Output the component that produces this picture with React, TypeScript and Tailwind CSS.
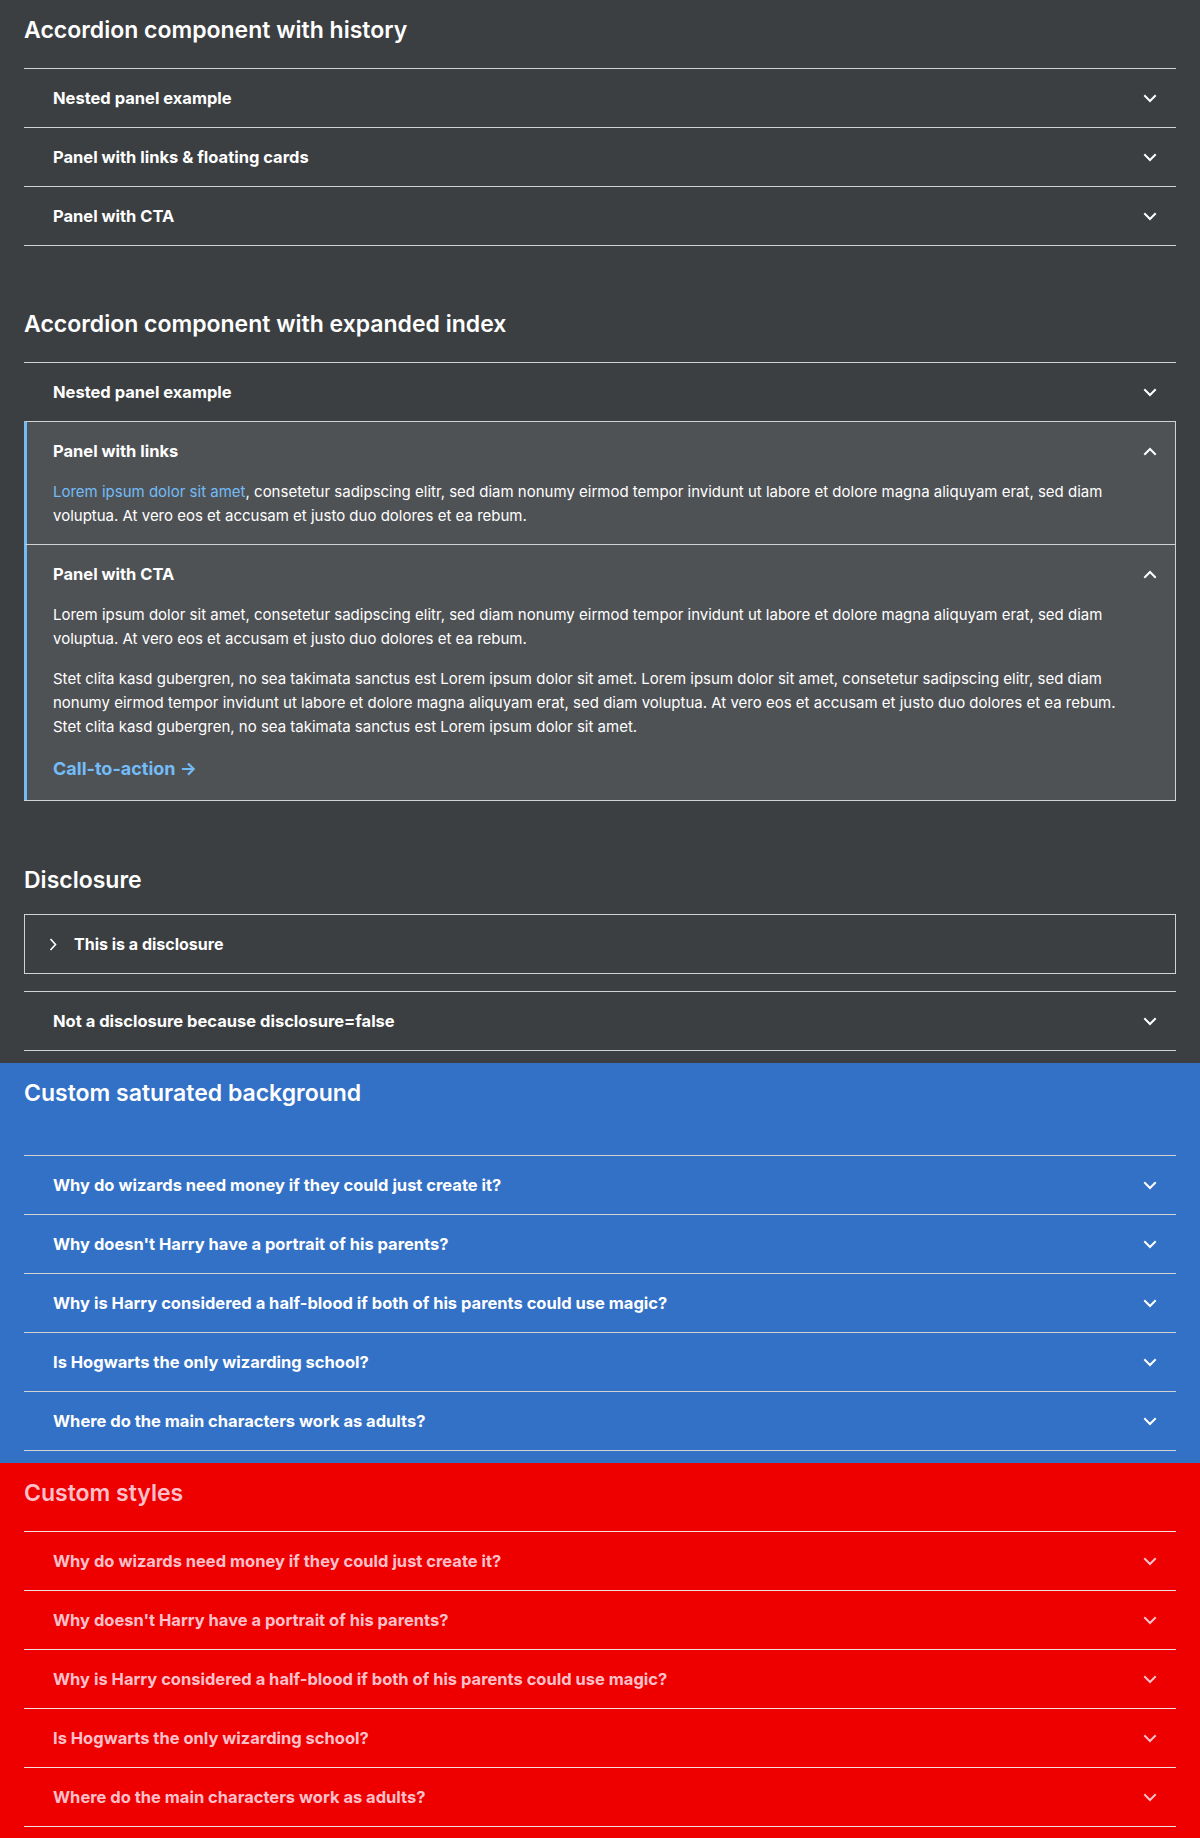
import React from "react";

const FONT = { fontFamily: "Inter, 'Noto Sans', 'Liberation Sans', sans-serif" };

const LOREM =
  "Lorem ipsum dolor sit amet, consetetur sadipscing elitr, sed diam nonumy eirmod tempor invidunt ut labore et dolore magna aliquyam erat, sed diam voluptua. At vero eos et accusam et justo duo dolores et ea rebum.";

const STET =
  "Stet clita kasd gubergren, no sea takimata sanctus est Lorem ipsum dolor sit amet. Lorem ipsum dolor sit amet, consetetur sadipscing elitr, sed diam nonumy eirmod tempor invidunt ut labore et dolore magna aliquyam erat, sed diam voluptua. At vero eos et accusam et justo duo dolores et ea rebum. Stet clita kasd gubergren, no sea takimata sanctus est Lorem ipsum dolor sit amet.";

const QUESTIONS = [
  "Why do wizards need money if they could just create it?",
  "Why doesn't Harry have a portrait of his parents?",
  "Why is Harry considered a half-blood if both of his parents could use magic?",
  "Is Hogwarts the only wizarding school?",
  "Where do the main characters work as adults?",
];

const ChevronDown = ({ up = false }: { up?: boolean }) => (
  <svg
    width="14"
    height="9"
    viewBox="0 0 14 9"
    fill="none"
    stroke="currentColor"
    strokeWidth="2"
    strokeLinecap="square"
    className={up ? "rotate-180" : ""}
  >
    <path d="M2 2 L7 7 L12 2" />
  </svg>
);

const ChevronRight = () => (
  <svg width="8" height="13" viewBox="0 0 8 13" fill="none" stroke="currentColor" strokeWidth="1.6">
    <path d="M1.5 1 L6.5 6.5 L1.5 12" />
  </svg>
);

// collapsed accordion row
const Row = ({ title, line = "border-[#d2d2d2]" }: { title: string; line?: string }) => (
  <div className={`flex h-[59px] items-center justify-between border-t pl-[29px] pr-[19px] ${line}`}>
    <span className="text-[16.5px] font-bold">{title}</span>
    <ChevronDown />
  </div>
);

// expanded accordion panel
const OpenPanel = ({ title, children }: { title: string; children: React.ReactNode }) => (
  <div className="border-t border-r border-l-[3px] border-[#d2d2d2] border-l-[#73bcf7] bg-[#4f5255]">
    <div className="flex h-[58px] items-center justify-between pl-[26px] pr-[18px]">
      <span className="text-[16.5px] font-bold">{title}</span>
      <ChevronDown up />
    </div>
    <div className="pl-[26px] pr-10 text-[15px] leading-6">{children}</div>
  </div>
);

const Heading = ({ children, className = "" }: { children: React.ReactNode; className?: string }) => (
  <h2 className={`text-[23px] font-semibold leading-7 ${className}`}>{children}</h2>
);

export default function App() {
  return (
    <div className="w-[1200px] text-white" style={FONT}>
      {/* dark area */}
      <div className="bg-[#3c3f42] px-6 pt-4 pb-3">
        <Heading>Accordion component with history</Heading>
        <div className="mt-6 border-b border-[#d2d2d2]">
          <Row title="Nested panel example" />
          <Row title="Panel with links & floating cards" />
          <Row title="Panel with CTA" />
        </div>

        <Heading className="mt-16">Accordion component with expanded index</Heading>
        <div className="mt-6 border-b border-[#d2d2d2]">
          <Row title="Nested panel example" />
          <OpenPanel title="Panel with links">
            <p className="pb-4">
              <a className="text-[#73bcf7]">Lorem ipsum dolor sit amet</a>, consetetur sadipscing elitr, sed diam
              nonumy eirmod tempor invidunt ut labore et dolore magna aliquyam erat, sed diam voluptua. At vero eos et
              accusam et justo duo dolores et ea rebum.
            </p>
          </OpenPanel>
          <OpenPanel title="Panel with CTA">
            <p>{LOREM}</p>
            <p className="mt-4">{STET}</p>
            <div className="mt-4 pb-[18px]">
              <a className="text-lg font-bold leading-[27px] text-[#73bcf7]">Call-to-action →</a>
            </div>
          </OpenPanel>
        </div>

        <Heading className="mt-[65px]">Disclosure</Heading>
        <div className="mt-5 flex h-[60px] items-center gap-[17px] border border-[#d2d2d2] pl-6">
          <ChevronRight />
          <span className="text-base font-bold">This is a disclosure</span>
        </div>
        <div className="mt-[17px] border-b border-[#d2d2d2]">
          <Row title="Not a disclosure because disclosure=false" />
        </div>
      </div>

      {/* saturated */}
      <div className="bg-[#3371c6] px-6 pt-4 pb-3">
        <Heading>Custom saturated background</Heading>
        <div className="mt-12 border-b border-[#d2d2d2]">
          {QUESTIONS.map((q) => (
            <Row key={q} title={q} />
          ))}
        </div>
      </div>

      {/* custom styles */}
      <div className="bg-[#ee0000] px-6 pt-4 pb-3 text-[#ffc0cb]">
        <Heading>Custom styles</Heading>
        <div className="mt-6 border-b border-[#f4dede]">
          {QUESTIONS.map((q) => (
            <Row key={q} title={q} line="border-[#f4dede]" />
          ))}
        </div>
      </div>
    </div>
  );
}
